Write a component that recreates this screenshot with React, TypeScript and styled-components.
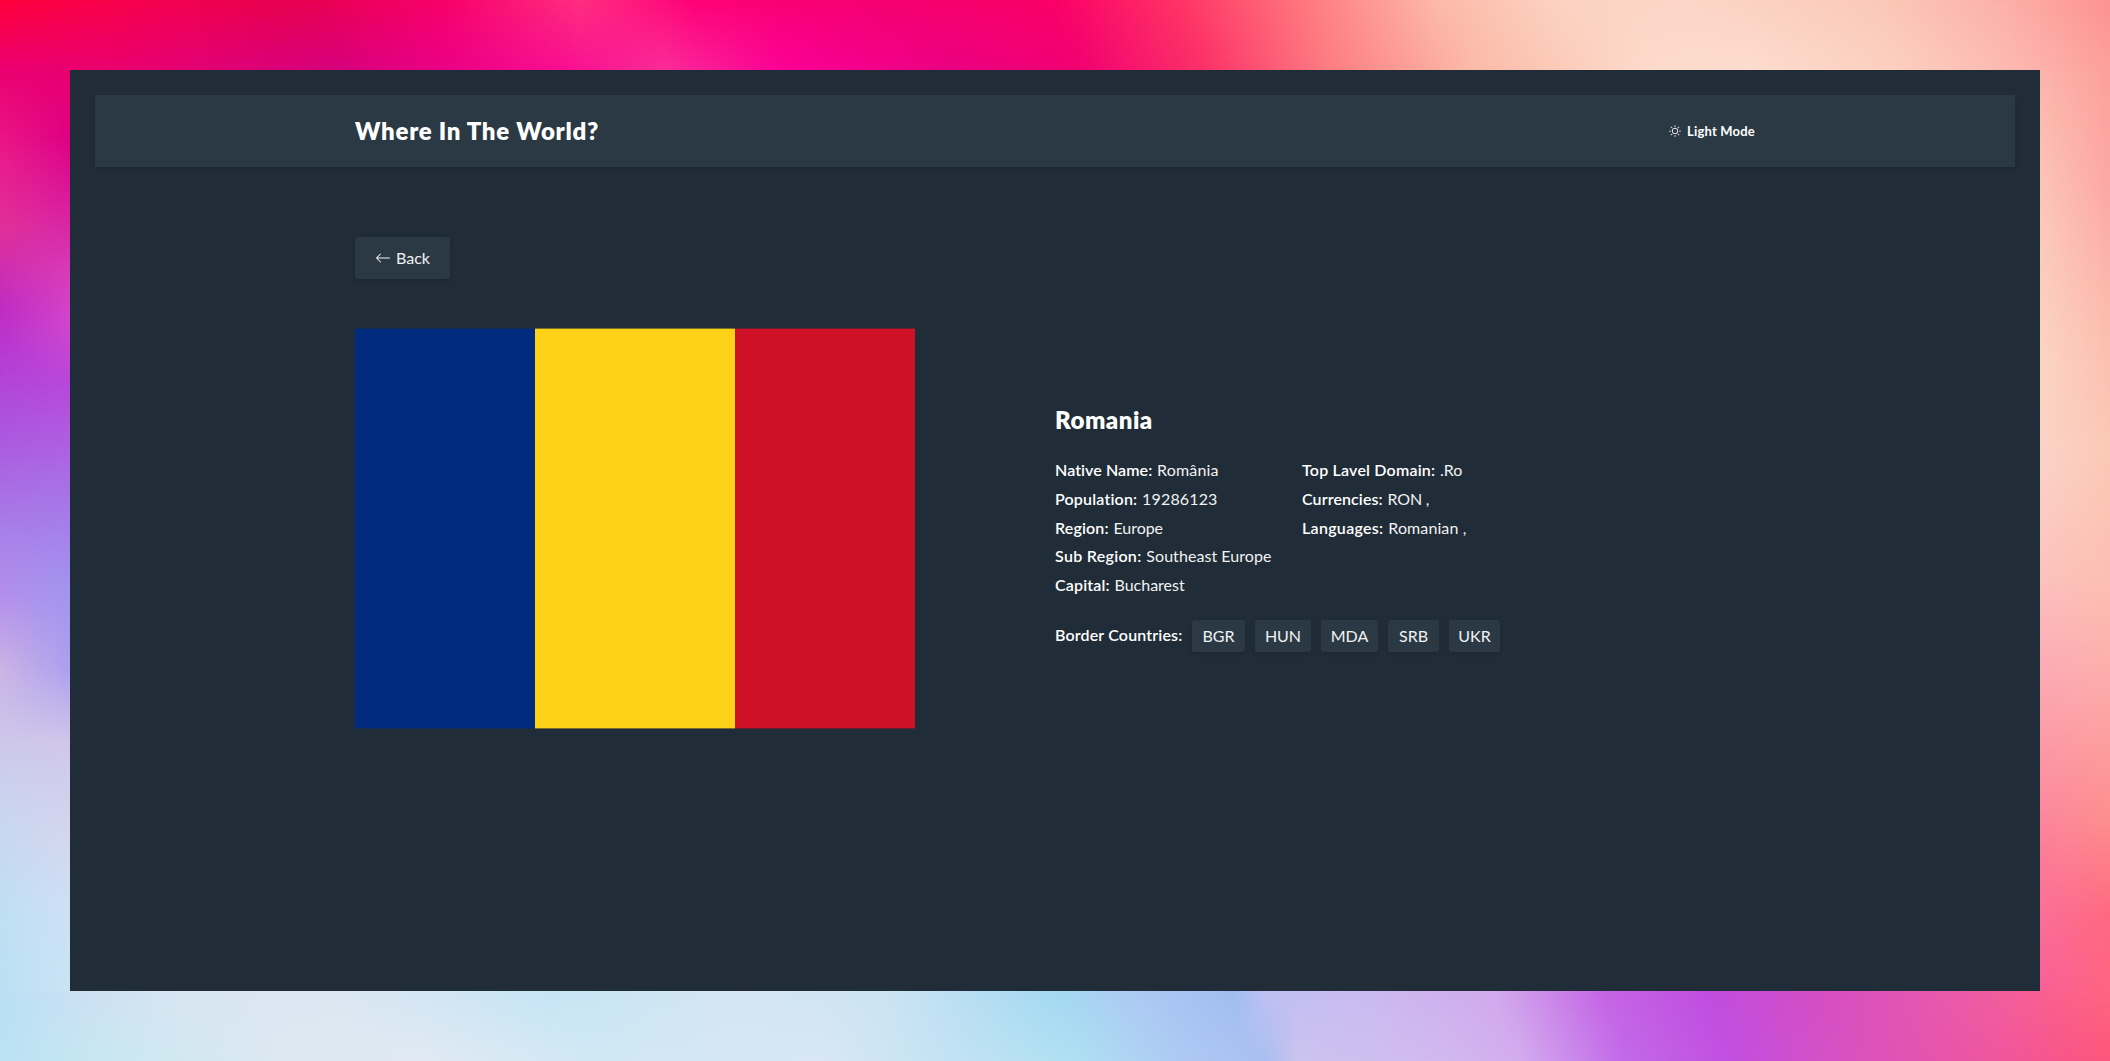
import React from "react";
import styled, { createGlobalStyle, css } from "styled-components";
import { BsArrowLeft, BsSun } from "react-icons/bs";

const GlobalStyle = createGlobalStyle`
  *, *::before, *::after { box-sizing: border-box; }
  body { margin: 0; overflow: hidden; font-family: Lato, "Open Sans", sans-serif; font-weight: 400; color: #fff; }
  h1, h2, ul, p { margin: 0; padding: 0; }
  button { font: inherit; color: inherit; border: 0; }
`;

const Backdrop = styled.div`
  display: grid;
  grid-template: "top top top" 70px "left screen right" 921px "bottom bottom bottom" 70px / 70px 1970px 70px;
  width: 2110px;
  height: 1061px;
`;

/* An edge of the wallpaper: the base gradient fades into the second one along the short side. */
const Edge = styled.div<{ $area: string; $axis: string; $from: string; $to: string }>`
  grid-area: ${(p) => p.$area};
  display: flex;
  background: linear-gradient(${(p) => p.$axis}, ${(p) => p.$from});
  &::after {
    content: "";
    flex: 1;
    background: linear-gradient(${(p) => p.$axis}, ${(p) => p.$to});
    mask-image: linear-gradient(${(p) => (p.$axis === "to right" ? "to bottom" : "to right")}, transparent, #000);
  }
`;

const Screen = styled.main`
  grid-area: screen;
  padding: 25px;
  background: #202c37;
  box-shadow: 0 0 1px rgba(0, 0, 0, 0.35);
`;

const Header = styled.header`
  height: 72px;
  background: #2b3945;
  box-shadow: 0 2px 4px rgba(0, 0, 0, 0.12);
`;

const Container = styled.div`
  width: 1400px;
  margin: 0 auto;
`;

const Bar = styled(Container)`
  display: flex;
  align-items: center;
  justify-content: space-between;
  height: 100%;
`;

const Title = styled.h1`
  padding-bottom: 2px;
  font-size: 24px;
  line-height: 33px;
  font-weight: 800;
  letter-spacing: 0.73px;
`;

const Mode = styled.button`
  display: flex;
  align-items: center;
  gap: 6px;
  padding: 0;
  background: none;
  font-size: 13px;
  line-height: 16px;
  font-weight: 700;
  letter-spacing: 0.2px;
  svg { width: 12px; height: 12px; }
  span { padding-bottom: 1px; }
`;

const raised = css`
  background: #2b3945;
  border-radius: 3px;
  box-shadow: 0 2px 5px rgba(0, 0, 0, 0.12);
`;

const Back = styled.button`
  ${raised}
  display: flex;
  align-items: center;
  justify-content: center;
  gap: 5px;
  width: 95px;
  height: 42px;
  margin-top: 70px;
  padding: 0;
  font-size: 16px;
  color: #f1f2f3;
  svg { width: 16px; height: 16px; }
  span { padding-bottom: 2px; }
`;

const Country = styled.section`
  display: grid;
  grid-template-columns: 560px 560px;
  column-gap: 140px;
  align-items: center;
  margin-top: 49px;
`;

const Flag = styled.svg`
  display: block;
  width: 560px;
  height: 401px;
`;

const Name = styled.h2`
  padding-bottom: 4px;
  font-size: 24px;
  line-height: 29px;
  font-weight: 800;
  letter-spacing: 0.5px;
`;

const Facts = styled.div`
  display: flex;
  gap: 30px;
  margin-top: 19px;
`;

const FactList = styled.ul`
  width: 217px;
  list-style: none;
`;

const Fact = styled.li`
  height: 28.75px;
  line-height: 26px;
  font-size: 16px;
  white-space: nowrap;
`;

const Label = styled.span<{ $track: number }>`
  font-weight: 600;
  letter-spacing: ${(p) => p.$track}px;
`;

const Value = styled.span<{ $track: number }>`
  margin-left: 4.8px;
  color: #f1f2f3;
  letter-spacing: ${(p) => p.$track}px;
`;

const Borders = styled.div`
  display: flex;
  align-items: center;
  gap: 10px;
  margin-top: 19px;
  font-size: 16px;
`;

const BordersLabel = styled(Label)`
  width: 127px;
  line-height: 30px;
  padding-bottom: 1px;
  white-space: nowrap;
`;

const Chip = styled.span<{ $width: number }>`
  ${raised}
  width: ${(p) => p.$width}px;
  height: 32px;
  line-height: 31px;
  text-align: center;
  color: #f1f2f3;
`;

type FactRow = [label: string, labelTrack: number, value: string, valueTrack: number];

const left: FactRow[] = [
  ["Native Name:", 0.08, "România", 0.15],
  ["Population:", 0.18, "19286123", 0.15],
  ["Region:", 0.15, "Europe", -0.05],
  ["Sub Region:", 0.3, "Southeast Europe", 0.06],
  ["Capital:", 0.15, "Bucharest", 0],
];
const right: FactRow[] = [
  ["Top Lavel Domain:", 0.2, ".Ro", 0],
  ["Currencies:", 0.1, "RON ,", -0.2],
  ["Languages:", 0.3, "Romanian ,", 0.1],
];
const borders: [string, number][] = [["BGR", 53], ["HUN", 56], ["MDA", 57], ["SRB", 51], ["UKR", 51]];

const Column = ({ rows }: { rows: FactRow[] }) => (
  <FactList>
    {rows.map(([label, lt, value, vt]) => (
      <Fact key={label}>
        <Label $track={lt}>{label}</Label>
        <Value $track={vt}>{value}</Value>
      </Fact>
    ))}
  </FactList>
);

export default function App() {
  return (
    <>
      <GlobalStyle />
      <Backdrop>
        <Edge $area="top" $axis="to right"
          $from="#ff003c 0, #f6004f 7%, #e6004e 14%, #f8006a 21%, #ff2e80 27.5%, #ff0078 33%, #f50070 42%, #fb0068 50%, #ff3565 56%, #ff7a80 62%, #fdb9a8 68%, #fcd3c2 74%, #fcd6c8 80%, #fbc9b8 89%, #fcb0a8 95%, #fd9292 100%"
          $to="#ea0070 0, #e8006f 6%, #dc0078 12%, #d6007c 16%, #ea0086 21%, #f80f91 27%, #fa2d98 31.5%, #fa0096 37%, #ea0082 45%, #f00072 51%, #fb3068 57%, #fd7d82 63%, #fbbba8 70%, #fcdacb 78%, #fcdccf 83%, #fbcebd 90%, #fcbab0 95%, #fca09c 100%" />
        <Edge $area="left" $axis="to bottom"
          $from="#ea0070 0, #ea1d8c 10%, #e03098 17%, #c02bc4 26%, #b53ad3 31%, #aa5de0 41%, #a97fe8 50%, #b48fec 57%, #ccb4e5 65%, #cdc8ea 73%, #cad5f0 80%, #bfdff3 91%, #bbe1f4 100%"
          $to="#e8006f 0, #de0083 7%, #d91a9c 14%, #d73cb8 22%, #d145cc 27%, #b747db 34%, #a86fe6 45%, #a094ee 56%, #ab9fee 65%, #cfc6ea 73%, #d3d6ed 83%, #cddff5 91%, #c9e3f4 100%" />
        <Screen>
          <Header>
            <Bar>
              <Title>Where In The World?</Title>
              <Mode><BsSun /><span>Light Mode</span></Mode>
            </Bar>
          </Header>
          <Container>
            <Back><BsArrowLeft /><span>Back</span></Back>
            <Country>
              <Flag viewBox="0 0 560 401">
                <rect x="0" y="0.6" width="180" height="399.8" fill="#002b7f" />
                <rect x="180" y="0.6" width="200" height="399.8" fill="#fcd116" />
                <rect x="380" y="0.6" width="180" height="399.8" fill="#ce1126" />
              </Flag>
              <div>
                <Name>Romania</Name>
                <Facts><Column rows={left} /><Column rows={right} /></Facts>
                <Borders>
                  <BordersLabel $track={0.15}>Border Countries:</BordersLabel>
                  {borders.map(([code, width]) => <Chip key={code} $width={width}>{code}</Chip>)}
                </Borders>
              </div>
            </Country>
          </Container>
        </Screen>
        <Edge $area="right" $axis="to bottom"
          $from="#fcb4aa 0, #fcc0b2 8%, #fccab9 17%, #fcd4c2 31%, #fbd2c8 43%, #fcc4c0 54%, #fcb0b8 63%, #fc96a4 75%, #fc7898 87%, #f86098 100%"
          $to="#fca09c 0, #fca6a2 12%, #fbbcae 28%, #fbc8b6 41%, #fcbeb0 56%, #fcaaaa 67%, #fd8c8c 82%, #ff6880 92%, #ff6480 100%" />
        <Edge $area="bottom" $axis="to right"
          $from="#b9e0f4 0, #cce0f3 4%, #d9e6f2 9%, #dce7f2 16%, #c6e5f5 26%, #d5e6f2 35%, #cce4f3 42%, #a4d9f2 50%, #adc9f3 54%, #a1bdf1 58.5%, #c0c0f2 60%, #cbbaf1 65%, #d2a9ed 71%, #c565e5 76%, #c04de0 81%, #d44dc5 86%, #ec5ba8 93%, #fa6090 97%, #ff6680 100%"
          $to="#bae2f3 0, #cbe8f1 6%, #dce8f2 13%, #e0e9f3 20%, #d0e8f4 28%, #d4e7f3 34%, #d8e7f3 39%, #c2e2f3 45%, #aee0f2 51%, #adc9f3 56%, #a9bff0 60%, #cbc3ef 61.5%, #d1b9ef 68%, #d3acee 72%, #c269e8 77%, #c14fe0 82%, #da52bd 88%, #f0569b 95%, #fd557a 100%" />
      </Backdrop>
    </>
  );
}
